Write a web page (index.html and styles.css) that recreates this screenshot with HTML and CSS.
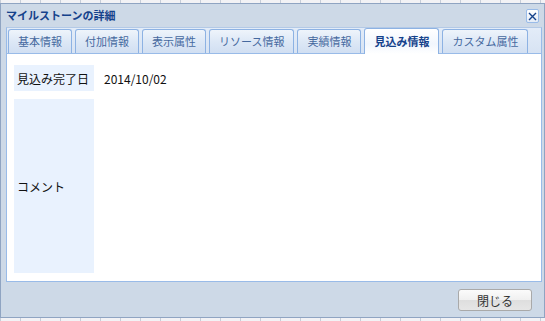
FILE: index.html
```html
<!DOCTYPE html>
<html lang="ja">
<head>
    <meta charset="UTF-8">
    <title>マイルストーンの詳細</title>
    <link rel="stylesheet" href="styles.css">
</head>
<body>
    <div class="window">
        <div class="window-header">
            <span class="window-title">マイルストーンの詳細</span>
            <span class="tool-close">
                <svg width="9" height="9" viewBox="0 0 9 9"><path d="M1 1 L8 8 M8 1 L1 8" stroke="#15428b" stroke-width="1.4"/></svg>
            </span>
        </div>

        <div class="window-body">
            <div class="tab-strip">
                <div class="tab">基本情報</div>
                <div class="tab">付加情報</div>
                <div class="tab">表示属性</div>
                <div class="tab">リソース情報</div>
                <div class="tab">実績情報</div>
                <div class="tab active">見込み情報</div>
                <div class="tab">カスタム属性</div>
            </div>

            <div class="tab-body">
                <div class="field-grid">
                    <div class="field-label">見込み完了日</div>
                    <div class="field-value">2014/10/02</div>
                    <div class="field-label">コメント</div>
                    <div class="field-value"></div>
                </div>
            </div>
        </div>

        <div class="window-footer">
            <button class="btn">閉じる</button>
        </div>
    </div>
</body>
</html>
```

FILE: styles.css
```css
body {
    margin: 0;
    padding-top: 3px;
    font-family: "Noto Sans CJK JP", "Noto Sans", sans-serif;
    font-size: 12px;
    color: #222;
    background-color: #f2f2f5;
    background-image: linear-gradient(to right, transparent 19px, #c6cdd8 19px);
    background-size: 20px 100%;
    background-position: 1px 0;
}
.window {
    height: 315px;
    box-sizing: border-box;
    border: 1px solid #8fa4c2;
    background-color: #cdd9e7;
    display: flex;
    flex-direction: column;
}
.window-header {
    height: 23px;
    box-sizing: border-box;
    padding: 0 5px 2px 5px;
    display: flex;
    align-items: center;
    justify-content: space-between;
}
.window-title {
    font-size: 11px;
    font-weight: bold;
    color: #15428b;
    line-height: 14px;
}
.tool-close {
    width: 13px;
    height: 14px;
    box-sizing: border-box;
    border: 1px solid #99bbe8;
    border-radius: 2px;
    background: linear-gradient(#ffffff, #e4ecf7);
    display: flex;
    align-items: center;
    justify-content: center;
    margin-top: 3px;
}
.window-body {
    flex: 1;
    display: flex;
    flex-direction: column;
    padding: 0 2px 0 5px;
}
.tab-strip {
    height: 27px;
    box-sizing: border-box;
    border: 1px solid #99bbe8;
    border-top-color: #b3c9e6;
    padding: 0 0 0 1px;
    background: linear-gradient(#e3ecf8, #d7e3f3);
    display: flex;
    align-items: flex-end;
    gap: 3px;
}
.tab {
    height: 24px;
    box-sizing: border-box;
    padding: 0 9px;
    border: 1px solid #8db2e3;
    border-bottom: none;
    border-radius: 3px 3px 0 0;
    background: linear-gradient(#eef4fb, #dde8f6 50%, #d1dff2);
    color: #46699f;
    font-size: 11px;
    line-height: 22px;
    white-space: nowrap;
}
.tab.active {
    height: 26px;
    margin-bottom: -1px;
    background: linear-gradient(#ffffff, #f1f6fd 60%, #ffffff);
    color: #15428b;
    font-weight: bold;
    line-height: 24px;
}
.tab-body {
    height: 228px;
    box-sizing: border-box;
    border: 1px solid #99bbe8;
    border-top: none;
    background-color: #fff;
    padding: 11px 7px 8px 7px;
}
.field-grid {
    height: 100%;
    display: grid;
    grid-template-columns: 80px 1fr;
    grid-template-rows: 26px 1fr;
    row-gap: 8px;
    column-gap: 10px;
}
.field-label {
    background-color: #e9f2fe;
    padding-left: 3px;
    display: flex;
    align-items: center;
    color: #111;
}
.field-value {
    display: flex;
    align-items: center;
    color: #111;
}
.window-footer {
    height: 35px;
    box-sizing: border-box;
    padding: 7px 12px 0 0;
    display: flex;
    justify-content: flex-end;
    align-items: flex-start;
}
.btn {
    width: 74px;
    height: 22px;
    border: 1px solid #a9a9a9;
    border-radius: 3px;
    background: linear-gradient(#fbfbfb, #f0f0f0 50%, #dedede 50%, #e6e6e6);
    font-family: "Noto Sans CJK JP", "Noto Sans", sans-serif;
    font-size: 12px;
    color: #333;
    padding: 0;
    cursor: pointer;
}
```
